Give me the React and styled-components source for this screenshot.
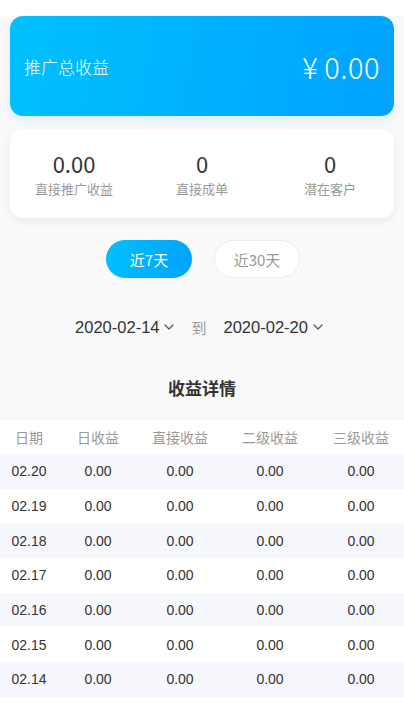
import React from "react";
import styled, { createGlobalStyle } from "styled-components";

const Global = createGlobalStyle`
  html, body { margin: 0; padding: 0; background: #fff; }
  body { font-family: "Liberation Sans", "Noto Sans CJK SC", sans-serif; -webkit-font-smoothing: antialiased; }
  * { box-sizing: border-box; }
`;

const Page = styled.div`
  width: 404px;
  min-height: 708px;
  background: #fff;
  padding-top: 16px;
`;

const Gray = styled.div`
  background: #f9f9f9;
  display: flex;
  flex-direction: column;
`;

const Top = styled.div`
  padding: 0 10px;
  display: flex;
  flex-direction: column;
  gap: 13px;
`;

const TotalCard = styled.div`
  height: 100px;
  border-radius: 13px;
  background: linear-gradient(100deg, #00c0fd 0%, #00a3ff 100%);
  box-shadow: 0 4px 10px rgba(0, 150, 230, 0.12);
  display: flex;
  align-items: center;
  justify-content: space-between;
  padding: 0 14px;
  color: #fff;
`;

const TotalLabel = styled.span`
  font-size: 17px;
  font-family: "Noto Sans CJK SC", sans-serif;
  font-weight: 300;
`;

const TotalValue = styled.span`
  display: flex;
  align-items: center;
  gap: 6px;
  font-size: 29px;
  font-weight: 300;
  font-family: "Noto Sans CJK SC", sans-serif;
  letter-spacing: 0.5px;
`;

const StatCard = styled.div`
  height: 89px;
  border-radius: 13px;
  background: #fff;
  box-shadow: 0 3px 10px rgba(0, 0, 0, 0.06);
  display: grid;
  grid-template-columns: repeat(3, 1fr);
  align-items: center;
`;

const Stat = styled.div`
  display: flex;
  flex-direction: column;
  align-items: center;
  gap: 4px;
`;

const StatValue = styled.span`
  font-size: 22px;
  color: #333;
  font-family: "Noto Sans CJK SC", sans-serif;
  font-weight: 400;
  line-height: 26px;
`;

const StatLabel = styled.span`
  font-size: 13px;
  color: #999;
  font-family: "Noto Sans CJK SC", sans-serif;
  line-height: 18px;
`;

const Tabs = styled.div`
  display: flex;
  justify-content: center;
  gap: 22px;
  margin-top: 22px;
  padding-left: 2px;
`;

const Tab = styled.div`
  width: 86px;
  height: 38px;
  border-radius: 19px;
  display: flex;
  align-items: center;
  justify-content: center;
  font-size: 15px;
  font-family: "Noto Sans CJK SC", sans-serif;
  color: ${(p) => (p.$active ? "#fff" : "#999")};
  background: ${(p) =>
    p.$active ? "linear-gradient(90deg, #00c0fd 0%, #00a3ff 100%)" : "#fff"};
  border: ${(p) => (p.$active ? "none" : "1px solid #ececec")};
`;

const DateRow = styled.div`
  display: flex;
  justify-content: center;
  align-items: center;
  height: 30px;
  margin-top: 34px;
  padding-right: 6px;
`;

const DatePick = styled.div`
  display: flex;
  align-items: center;
  gap: 5px;
  font-size: 16.5px;
  color: #333;
`;

const To = styled.span`
  font-size: 15px;
  color: #999;
  margin: 0 17px 0 17px;
  font-family: "Noto Sans CJK SC", sans-serif;
`;

const Title = styled.div`
  text-align: center;
  font-size: 17px;
  font-weight: 700;
  color: #333;
  font-family: "Noto Sans CJK SC", sans-serif;
  margin-top: 31px;
  height: 31px;
  line-height: 30px;
`;

const Spacer = styled.div`
  height: 16px;
`;

const Table = styled.div`
  background: #fff;
`;

const Row = styled.div`
  display: grid;
  grid-template-columns: 58px 80px 84px 96px 1fr;
  height: ${(p) => (p.$head ? "34px" : "34.7px")};
  align-items: center;
  background: ${(p) => (p.$alt ? "#f7f8fd" : "#fff")};
`;

const Cell = styled.div`
  text-align: center;
  font-size: 14px;
  color: ${(p) => (p.$head ? "#999" : "#333")};
  font-family: ${(p) =>
    p.$head ? '"Noto Sans CJK SC", sans-serif' : '"Liberation Sans", sans-serif'};
`;

const Chevron = () => (
  <svg width="10" height="6" viewBox="0 0 10 6" fill="none">
    <path d="M1 1l4 4 4-4" stroke="#555" strokeWidth="1.2" strokeLinecap="round" strokeLinejoin="round" />
  </svg>
);

const heads = ["日期", "日收益", "直接收益", "二级收益", "三级收益"];
const dates = ["02.20", "02.19", "02.18", "02.17", "02.16", "02.15", "02.14"];

export default function App() {
  return (
    <Page>
      <Global />
      <Gray>
        <Top>
          <TotalCard>
            <TotalLabel>推广总收益</TotalLabel>
            <TotalValue>
              <span>¥</span>
              <span>0.00</span>
            </TotalValue>
          </TotalCard>
          <StatCard>
            <Stat>
              <StatValue>0.00</StatValue>
              <StatLabel>直接推广收益</StatLabel>
            </Stat>
            <Stat>
              <StatValue>0</StatValue>
              <StatLabel>直接成单</StatLabel>
            </Stat>
            <Stat>
              <StatValue>0</StatValue>
              <StatLabel>潜在客户</StatLabel>
            </Stat>
          </StatCard>
        </Top>
        <Tabs>
          <Tab $active>近7天</Tab>
          <Tab>近30天</Tab>
        </Tabs>
        <DateRow>
          <DatePick>
            2020-02-14 <Chevron />
          </DatePick>
          <To>到</To>
          <DatePick>
            2020-02-20 <Chevron />
          </DatePick>
        </DateRow>
        <Title>收益详情</Title>
        <Spacer />
        <Table>
          <Row $head>
            {heads.map((h) => (
              <Cell $head key={h}>{h}</Cell>
            ))}
          </Row>
          {dates.map((d, i) => (
            <Row key={d} $alt={i % 2 === 0}>
              <Cell>{d}</Cell>
              <Cell>0.00</Cell>
              <Cell>0.00</Cell>
              <Cell>0.00</Cell>
              <Cell>0.00</Cell>
            </Row>
          ))}
        </Table>
      </Gray>
    </Page>
  );
}
